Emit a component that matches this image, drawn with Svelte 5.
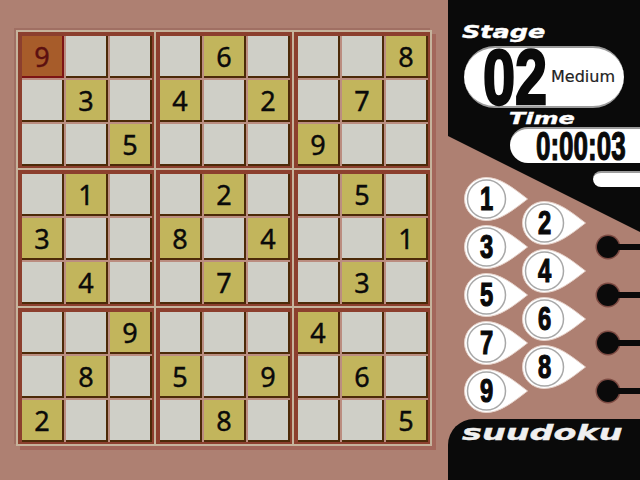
<script lang="ts">
	const grid = [
		'9...6...8',
		'.3.4.2.7.',
		'..5...9..',
		'.1..2..5.',
		'3..8.4..1',
		'.4..7..3.',
		'..9...4..',
		'.8.5.9.6.',
		'2...8...5'
	];

	function boxCells(bx: number, by: number) {
		const out: { v: string; sel: boolean }[] = [];
		for (let r = by * 3; r < by * 3 + 3; r++) {
			for (let c = bx * 3; c < bx * 3 + 3; c++) {
				const v = grid[r][c];
				out.push({ v: v === '.' ? '' : v, sel: r === 0 && c === 0 });
			}
		}
		return out;
	}

	const boxes = [0, 1, 2].flatMap((by) => [0, 1, 2].map((bx) => boxCells(bx, by)));
	const oddKeys = [1, 3, 5, 7, 9];
	const evenKeys = [2, 4, 6, 8];
	const pegs = [0, 1, 2, 3];
</script>

{#snippet key(n: number)}
	<button class="key">
		<svg width="64" height="44" viewBox="0 0 64 44">
			<path d="M22 .5C36 .5 48 10 63.500 22 48 34 36 43.500 22 43.500A21.500 21.500 0 0 1 22 .5Z" fill="#fff" stroke="#e6d2ca" />
			<circle cx="22.500" cy="22" r="19" fill="none" stroke="#a8a8a8" stroke-width="1.500" />
		</svg>
		<span class="key-num">{n}</span>
	</button>
{/snippet}

<div class="screen">
	<main class="board-area">
		<div class="board">
			{#each boxes as box}
				<div class="box">
					{#each box as cell}
						<div class="cell" class:given={cell.v} class:sel={cell.sel}>{cell.v}</div>
					{/each}
				</div>
			{/each}
		</div>
	</main>

	<aside class="side">
		<h2 class="label stage-label"><span>Stage</span></h2>
		<div class="stage-pill">
			<span class="stage-num"><span>02</span></span>
			<span class="level">Medium</span>
		</div>
		<h2 class="label time-label"><span>Time</span></h2>
		<div class="time-pill"><span>0:00:03</span></div>

		<div class="pad">
			<div class="col odd">
				{#each oddKeys as n}{@render key(n)}{/each}
			</div>
			<div class="col even">
				{#each evenKeys as n}{@render key(n)}{/each}
			</div>
			<div class="col slots">
				<div class="bar"></div>
				{#each pegs as p}
					<div class="peg" data-p={p}></div>
				{/each}
			</div>
		</div>

		<footer class="logo"><span>suudoku</span></footer>
	</aside>
</div>

<style>
	:global(body) {
		margin: 0;
		background: #ae8072;
	}
	.screen {
		display: flex;
		width: 640px;
		height: 480px;
		overflow: hidden;
		background: #ae8072;
	}
	.board-area {
		width: 448px;
		padding: 30px 0 0 16px;
		box-sizing: border-box;
	}
	.board {
		display: grid;
		grid-template-columns: repeat(3, 136px);
		gap: 2px;
		width: max-content;
		background: #c6b39c;
		border: 2px solid #c6b39c;
		box-shadow: -2px -2px 0 #a06f63, 4px 4px 0 #a3675b;
	}
	.box {
		display: grid;
		grid-template-columns: repeat(3, 42px);
		grid-auto-rows: 42px;
		gap: 2px;
		background: #bb8d80;
		border: solid #8c3f2e;
		border-width: 4px 2px 2px 4px;
	}
	.cell {
		display: flex;
		align-items: center;
		justify-content: center;
		background: #cfcfc7;
		border-right: 2px solid #4c2a08;
		border-bottom: 2px solid #4c2a08;
		font: 27px/1 "Noto Sans", sans-serif;
		color: #0a0a0a;
		-webkit-text-stroke: 0.4px #0a0a0a;
	}
	.given {
		background: #c2b55c;
	}
	.sel {
		background: #a75c2a;
		border-color: #7d1414;
		color: #5c1010;
		-webkit-text-stroke-color: #5c1010;
	}

	.side {
		position: relative;
		display: flex;
		flex-direction: column;
		width: 192px;
		height: 480px;
	}
	.side::before {
		content: '';
		position: absolute;
		inset: 0;
		background: #0a0a0a;
		clip-path: polygon(0 0, 100% 0, 100% 232px, 0 136px);
	}
	.side > * {
		position: relative;
	}
	.label {
		margin: 0;
		font: italic bold 17px/1 "DejaVu Sans", sans-serif;
		color: #fff;
		-webkit-text-stroke: 0.4px #fff;
	}
	.label span {
		display: inline-block;
		transform: scaleX(1.5);
		transform-origin: left;
	}
	.stage-label {
		margin: 24px 0 0 14px;
		height: 19px;
	}
	.stage-pill {
		display: flex;
		align-items: center;
		box-sizing: border-box;
		width: 160px;
		height: 62px;
		margin: 3px 0 0 16px;
		border-radius: 31px;
		background: #fff;
		border: solid #9c9c9c;
		border-width: 2px 0;
	}
	.stage-num {
		width: 68px;
		margin-left: 19px;
		font: bold 78px/58px "Liberation Sans", sans-serif;
		color: #0a0a0a;
		-webkit-text-stroke: 2.5px #0a0a0a;
	}
	.stage-num span {
		display: inline-block;
		transform: scaleX(0.74);
		transform-origin: left;
	}
	.level {
		font: 16px/1 "DejaVu Sans", sans-serif;
		color: #222;
		-webkit-text-stroke: 0.2px #222;
	}
	.time-label {
		margin: 3px 0 0 61px;
		height: 16px;
		font-size: 16px;
	}
	.time-pill {
		display: flex;
		align-items: center;
		box-sizing: border-box;
		width: 130px;
		height: 36px;
		margin: 0 0 0 62px;
		padding-left: 26px;
		align-self: flex-start;
		border-radius: 18px 0 0 18px;
		background: #fff;
		border-top: 2px solid #9c9c9c;
		font: bold 40px/34px "Liberation Sans", sans-serif;
		color: #0a0a0a;
		-webkit-text-stroke: 1.2px #0a0a0a;
	}
	.time-pill span {
		display: inline-block;
		transform: scaleX(0.65);
		transform-origin: left;
	}

	.pad {
		display: flex;
		margin: 8px 0 0 16px;
	}
	.col {
		display: flex;
		flex-direction: column;
	}
	.odd,
	.even {
		gap: 4px;
	}
	.odd {
		margin-top: 6px;
	}
	.even {
		margin: 30px 0 0 -6px;
	}
	.slots {
		width: 47px;
		margin-left: 7px;
	}
	.bar {
		height: 16px;
		margin-bottom: 49px;
		border-radius: 8px 0 0 8px;
		background: #fff;
		border-top: 2px solid #9c9c9c;
		box-sizing: border-box;
	}
	.peg {
		position: relative;
		width: 22px;
		height: 22px;
		margin: 0 0 26px 4px;
		border-radius: 50%;
		background: #0a0a0a;
		box-shadow: 0 0 0 1.500px #7c4a42;
	}
	.peg::after {
		content: '';
		position: absolute;
		left: 18px;
		top: 8px;
		width: 26px;
		height: 6px;
		background: #0a0a0a;
	}
	.key {
		position: relative;
		display: block;
		width: 64px;
		height: 44px;
		padding: 0;
		border: 0;
		background: none;
	}
	.key svg {
		display: block;
	}
	.key-num {
		position: absolute;
		left: 0;
		top: 0;
		width: 45px;
		height: 44px;
		font: bold 33px/44px "Liberation Sans", sans-serif;
		text-align: center;
		color: #0a0a0a;
		-webkit-text-stroke: 1.2px #0a0a0a;
		transform: scaleX(0.72);
	}

	.logo {
		position: absolute;
		left: 0;
		right: 0;
		bottom: 0;
		height: 61px;
		box-sizing: border-box;
		padding: 3px 0 0 14px;
		background: #0a0a0a;
		border-radius: 26px 0 0 0;
		font: italic bold 22px/1 "DejaVu Sans", sans-serif;
		color: #f0f0f0;
		-webkit-text-stroke: 0.4px #f0f0f0;
	}
	.logo span {
		display: inline-block;
		transform: scaleX(1.52);
		transform-origin: left;
	}
</style>
